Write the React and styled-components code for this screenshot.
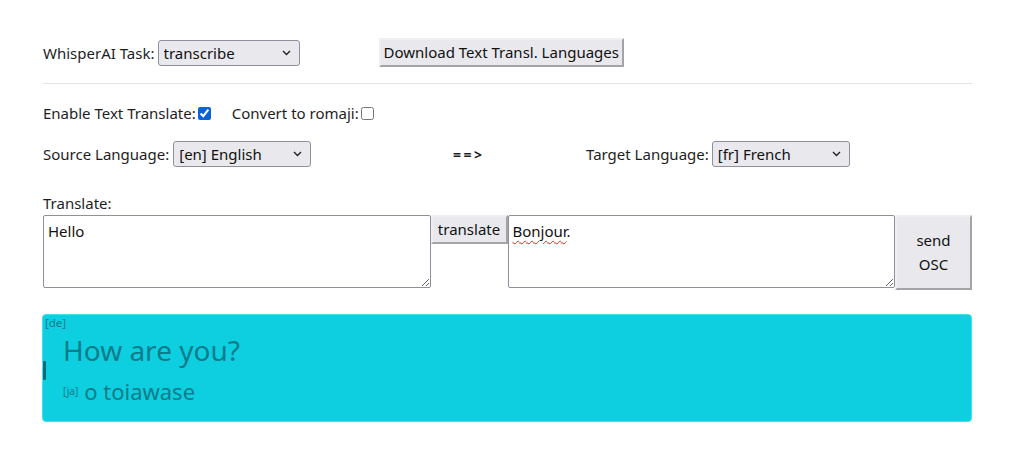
import React from "react";
import styled, { createGlobalStyle } from "styled-components";

const Global = createGlobalStyle`
  body { margin: 8px; background: #fff; }
  * { box-sizing: border-box; }
`;

const FONT = `"Noto Sans", "Open Sans", sans-serif`;

const Page = styled.div`
  padding: 30px 35px;
  font-family: ${FONT};
  font-size: 15px;
  color: #1e1e1e;
`;

const Row = styled.div`
  display: flex;
  align-items: ${(p) => p.$align || "center"};
  height: ${(p) => p.$h || 26}px;
  margin-top: ${(p) => p.$mt || 0}px;
`;

const Label = styled.span`
  white-space: nowrap;
  margin-right: ${(p) => p.$mr ?? 3}px;
`;

const SelectWrap = styled.div`
  position: relative;
  width: ${(p) => p.$w}px;
  height: 26px;
`;

const Select = styled.select`
  appearance: none;
  width: 100%;
  height: 100%;
  border: 1px solid #8f8f9d;
  border-radius: 3px;
  background: #e9e9ed;
  font-family: ${FONT};
  font-size: 15px;
  color: #111;
  padding: 0 24px 0 5px;
`;

const Chevron = styled.svg`
  position: absolute;
  right: 9px;
  top: 10px;
  pointer-events: none;
`;

const Button = styled.button`
  font-family: ${FONT};
  font-size: 15px;
  color: #111;
  background: #e9e9ed;
  border: 2px solid;
  border-color: #efeff2 #a3a3a8 #a3a3a8 #efeff2;
  padding: 0 3px;
  width: ${(p) => (p.$w ? `${p.$w}px` : "auto")};
  height: ${(p) => p.$h}px;
  margin-left: ${(p) => p.$ml || 0}px;
  line-height: 1.55;
  flex-shrink: 0;
  align-self: flex-start;
`;

const Divider = styled.hr`
  border: none;
  height: 1px;
  background: #e2e2e2;
  margin: 16px 0 0;
`;

const Check = styled.input`
  width: 13px;
  height: 13px;
  margin: 1px 0 0 2px;
  accent-color: #0b61d8;
`;

const CheckGroup = styled.label`
  display: flex;
  align-items: center;
  margin-right: ${(p) => p.$mr || 0}px;
`;

const LangGroup = styled.div`
  display: flex;
  align-items: center;
  width: ${(p) => p.$w}px;
  flex-shrink: 0;
`;

const Arrow = styled.span`
  font-weight: 700;
  font-size: 14px;
  letter-spacing: 2.5px;
`;

const TextRow = styled.div`
  display: flex;
  height: 75px;
`;

const TextBox = styled.div`
  flex: 1;
  height: 73px;
  border: 1px solid #8f8f9d;
  border-radius: 2px;
  padding: 5px 4px;
  line-height: 20px;
  resize: both;
  overflow: auto;
  background: #fff;
  color: #111;
  outline: none;
`;

const Misspelled = styled.span`
  text-decoration: underline wavy #e0201a;
  text-decoration-thickness: 1px;
  text-underline-offset: 3px;
`;

const Box = styled.div`
  margin-top: 24px;
  margin-left: -1px;
  height: 108px;
  background: #0ecfdf;
  border: 1px solid #3ee2ee;
  border-radius: 4px;
  color: #0c7b8b;
  padding: 1px 0;
`;

const Tag = styled.div`
  font-size: 11.5px;
  line-height: 14px;
  padding-left: 2px;
`;

const Body = styled.div`
  display: flex;
  align-items: flex-start;
`;

const SideBar = styled.div`
  width: 3px;
  height: 19px;
  background: #0b6b78;
  border-radius: 1px;
  margin-top: 31px;
  flex-shrink: 0;
`;

const Content = styled.div`
  margin-left: 17px;
  padding-top: 3px;
`;

const Main = styled.div`
  font-size: 28px;
  line-height: 34px;
`;

const Sub = styled.div`
  display: flex;
  align-items: baseline;
  margin-top: 10px;
`;

const SmallTag = styled.span`
  font-size: 10px;
  margin-right: 6px;
  position: relative;
  top: -5px;
`;

const SubText = styled.span`
  font-size: 22px;
  line-height: 28px;
`;

function Dropdown({ w, value, options }) {
  return (
    <SelectWrap $w={w}>
      <Select defaultValue={value}>
        {options.map((o) => (
          <option key={o}>{o}</option>
        ))}
      </Select>
      <Chevron width="9" height="6" viewBox="0 0 9 6">
        <path d="M1 1 L4.5 4.5 L8 1" fill="none" stroke="#222" strokeWidth="1.4" />
      </Chevron>
    </SelectWrap>
  );
}

export default function App() {
  return (
    <>
      <Global />
      <Page>
        <Row $h={29}>
          <Label>WhisperAI Task:</Label>
          <Dropdown w={142} value="transcribe" options={["transcribe", "translate"]} />
          <Button $ml={79} $h={29}>Download Text Transl. Languages</Button>
        </Row>
        <Divider />
        <Row $h={20} $mt={19}>
          <CheckGroup $mr={21}>
            <Label $mr={0}>Enable Text Translate:</Label>
            <Check type="checkbox" defaultChecked />
          </CheckGroup>
          <CheckGroup>
            <Label $mr={0}>Convert to romaji:</Label>
            <Check type="checkbox" />
          </CheckGroup>
        </Row>
        <Row $mt={18}>
          <LangGroup $w={410}>
            <Label $mr={4}>Source Language:</Label>
            <Dropdown w={138} value="[en] English" options={["[en] English", "[de] German", "[ja] Japanese"]} />
          </LangGroup>
          <LangGroup $w={133}>
            <Arrow>==&gt;</Arrow>
          </LangGroup>
          <LangGroup>
            <Label $mr={3}>Target Language:</Label>
            <Dropdown w={138} value="[fr] French" options={["[fr] French", "[en] English", "[de] German"]} />
          </LangGroup>
        </Row>
        <Row $h={22} $mt={26} $align="flex-start">
          <Label>Translate:</Label>
        </Row>
        <TextRow>
          <TextBox contentEditable suppressContentEditableWarning>Hello</TextBox>
          <Button $w={77} $h={29}>translate</Button>
          <TextBox contentEditable suppressContentEditableWarning>
            <Misspelled>Bonjour</Misspelled>.
          </TextBox>
          <Button $w={77} $h={75}>send<br />OSC</Button>
        </TextRow>
        <Box>
          <Tag>[de]</Tag>
          <Body>
            <SideBar />
            <Content>
              <Main>How are you?</Main>
              <Sub>
                <SmallTag>[ja]</SmallTag>
                <SubText>o toiawase</SubText>
              </Sub>
            </Content>
          </Body>
        </Box>
      </Page>
    </>
  );
}
